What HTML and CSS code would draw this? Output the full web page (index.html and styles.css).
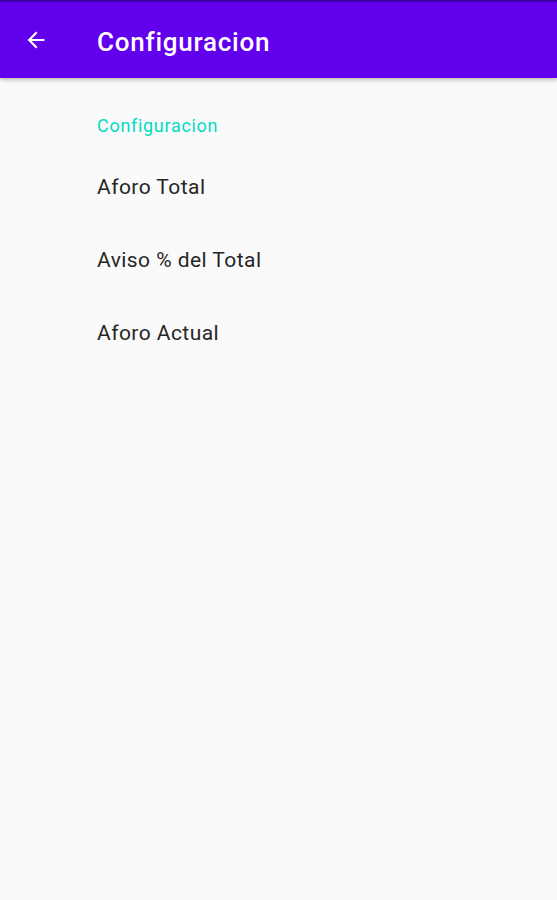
FILE: index.html
```html
<!DOCTYPE html>
<html>
<head>
	<title>Configuracion</title>
	<link rel="stylesheet" href="styles.css">
</head>
<body>
	<!-- Toolbar -->
	<header class="toolbar">
		<span class="toolbar-back">
			<svg width="24" height="24" viewBox="0 0 24 24"><path d="M20 11H7.83l5.59-5.59L12 4l-8 8 8 8 1.41-1.41L7.83 13H20v-2z" fill="#fff"/></svg>
		</span>
		<h1 class="toolbar-title">Configuracion</h1>
	</header>

	<!-- Preferences -->
	<section class="prefs">
		<h2 class="prefs-category">Configuracion</h2>
		<div class="prefs-item">Aforo Total</div>
		<div class="prefs-item">Aviso % del Total</div>
		<div class="prefs-item">Aforo Actual</div>
	</section>
</body>
</html>
```

FILE: styles.css
```css
body {
	margin: 0;
	font-family: Roboto, "Noto Sans", sans-serif;
	background-color: #fafafa;
	height: 900px;
}

.toolbar {
	display: flex;
	align-items: center;
	height: 76px;
	background-color: #6200ee;
	border-top: 2px solid #3a00a0;
	box-shadow: 0 2px 4px rgba(0, 0, 0, 0.25);
}

.toolbar-back {
	display: flex;
	width: 24px;
	height: 24px;
	margin-left: 24px;
	transform: scale(1.05);
}

.toolbar-title {
	margin: 3px 0 0 49px;
	color: #fff;
	font-size: 26px;
	font-weight: 500;
	letter-spacing: 0.75px;
}

.prefs {
	padding: 36px 0 0 97px;
}

.prefs-category {
	margin: 0;
	color: #03dac5;
	font-size: 18px;
	font-weight: 400;
	letter-spacing: 0.7px;
	line-height: 24px;
}

.prefs-item {
	display: flex;
	align-items: center;
	height: 73px;
	color: #262626;
	font-size: 21px;
	letter-spacing: 0.45px;
}

.prefs-category + .prefs-item {
	margin-top: 12px;
}
```
